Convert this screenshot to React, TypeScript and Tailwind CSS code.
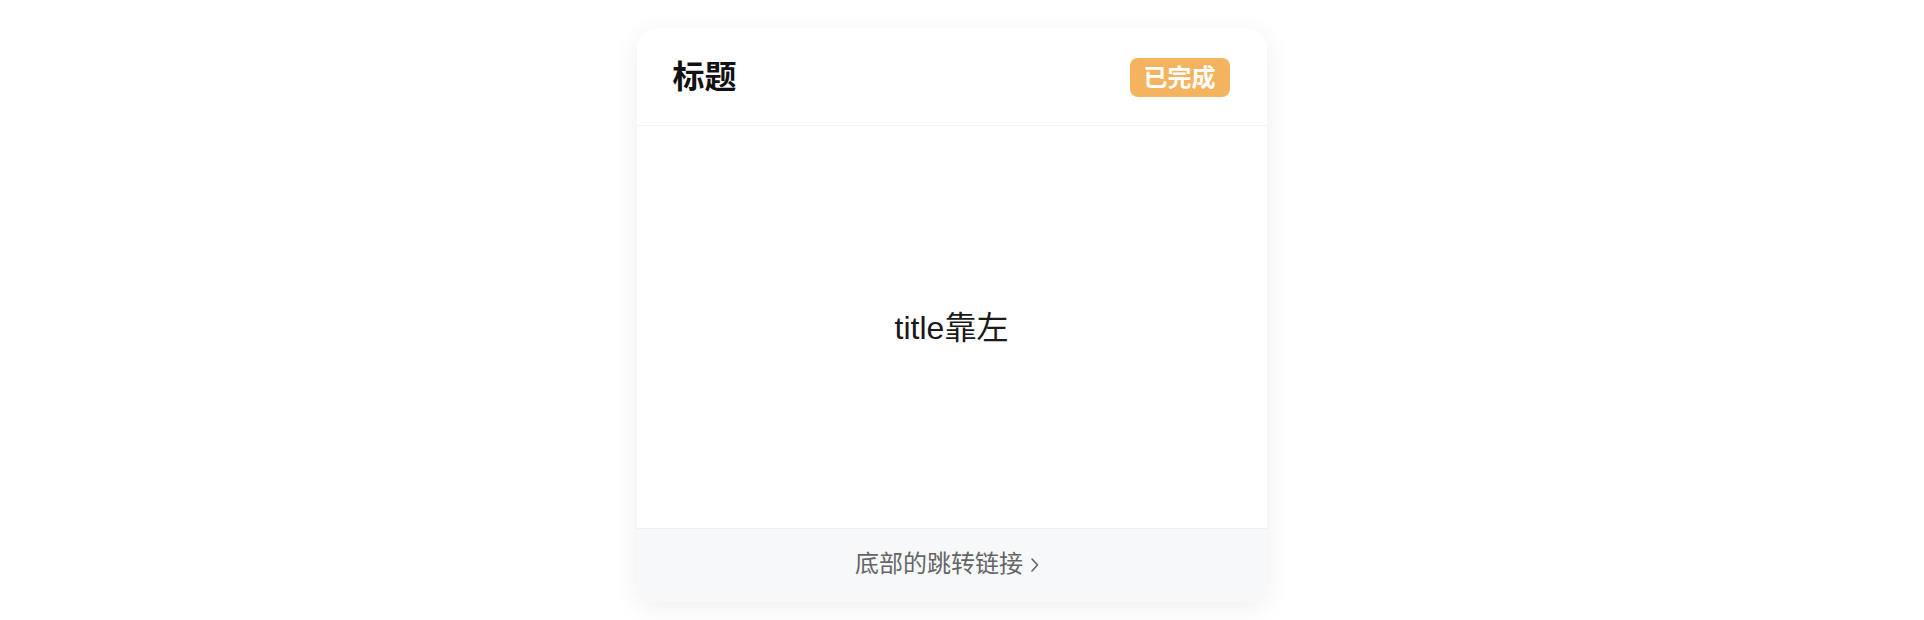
import React from 'react';

const font = '"Liberation Sans", "Noto Sans CJK SC", sans-serif';

export default function App() {
  return (
    <div className="min-h-[620px] w-full bg-white pr-[21px] pt-[28px]" style={{ fontFamily: font }}>
      <div className="mx-auto flex w-[630px] flex-col overflow-hidden rounded-[20px] bg-white shadow-[0_6px_28px_rgba(0,0,0,0.07)]">
        {/* Header */}
        <div className="flex h-[98px] items-center justify-between border-b border-[#f4f5f6] pl-[36px] pr-[37px]">
          <div className="text-[32px] font-bold leading-none text-[#111]">标题</div>
          <div className="mt-[2px] flex h-[39px] items-center rounded-[8px] bg-[#f4b35e] px-[14px] text-[24px] font-bold leading-none text-white">
            已完成
          </div>
        </div>

        {/* Body */}
        <div className="flex h-[402px] items-center justify-center pt-[2px] text-[32px] leading-none text-[#1a1a1a]">
          title靠左
        </div>

        {/* Footer */}
        <div className="flex h-[74px] items-center justify-center gap-[7px] border-t border-[#eef0f2] bg-[#f7f8fa] pb-[3px] pr-[8px] text-[24px] leading-none text-[#646566]">
          <span>底部的跳转链接</span>
          <svg width="10" height="16" viewBox="0 0 10 16" fill="none" className="mt-[2px]">
            <path d="M2 2 L7.5 8 L2 14" stroke="#646566" strokeWidth="1.6" strokeLinecap="round" strokeLinejoin="round" />
          </svg>
        </div>
      </div>
    </div>
  );
}
